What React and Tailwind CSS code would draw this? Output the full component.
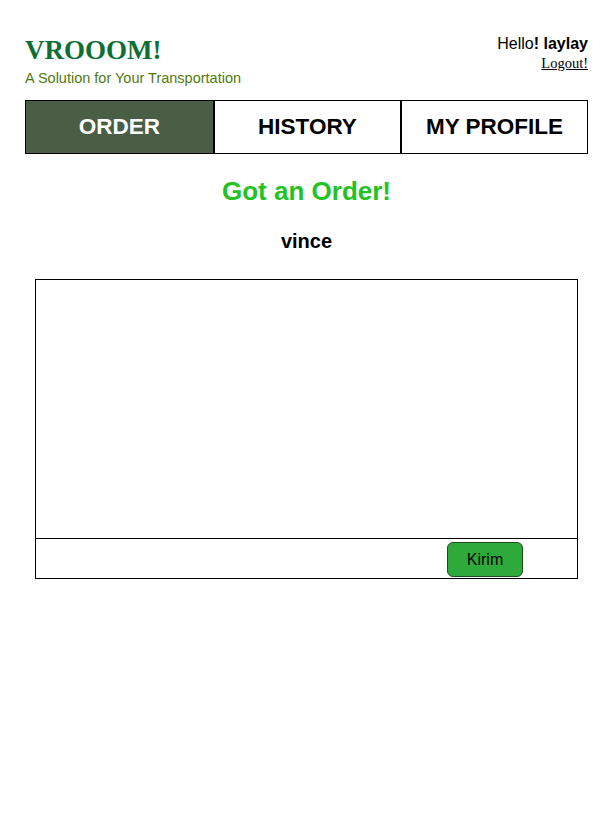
export default function App() {
  const tabs = ["ORDER", "HISTORY", "MY PROFILE"];

  return (
    <div className="min-h-[816px] bg-white px-[25px] pt-[33px] font-['Liberation_Sans',Arial,sans-serif] text-black">
      {/* Header */}
      <div className="flex items-start justify-between">
        <div>
          <h1 className="font-['Liberation_Serif','Times_New_Roman',serif] text-[27px] font-bold leading-[34px] text-[#0e6f34]">
            VROOOM!
          </h1>
          <p className="mt-[2px] text-[14.5px] leading-[18px] text-[#4f7a0f]">
            A Solution for Your Transportation
          </p>
        </div>
        <div className="flex flex-col items-end pt-[1px]">
          <p className="text-[16px] leading-[20px]">
            Hello<b>! laylay</b>
          </p>
          <a
            href="#"
            className="mt-[1px] font-['Liberation_Serif','Times_New_Roman',serif] text-[14.5px] leading-[17px] text-black underline"
          >
            Logout!
          </a>
        </div>
      </div>

      {/* Tabs */}
      <div className="mt-[13px] grid grid-cols-3 border border-black">
        {tabs.map((t, i) => (
          <div
            key={t}
            className={
              i === 0
                ? "flex h-[52px] items-center justify-center bg-[#4a5e45] text-[22.5px] font-bold text-white"
                : "flex h-[52px] items-center justify-center border-l-2 border-black bg-white text-[22.5px] font-bold text-black"
            }
          >
            {t}
          </div>
        ))}
      </div>

      {/* Title */}
      <h2 className="mt-[21px] text-center text-[26px] font-bold leading-[32px] text-[#22c322]">
        Got an Order!
      </h2>
      <p className="mt-[22px] text-center text-[20px] font-bold leading-[24px]">vince</p>

      {/* Chat box */}
      <div className="mx-[10px] mt-[26px] border border-black">
        <div className="h-[259px] border-b border-black"></div>
        <div className="flex h-[39px] items-start justify-end pr-[54px] pt-[3px]">
          <button className="h-[35px] w-[76px] rounded-[6px] border border-[#1f4d22] bg-[#2eaa3a] text-[16px] text-black">
            Kirim
          </button>
        </div>
      </div>
    </div>
  );
}
